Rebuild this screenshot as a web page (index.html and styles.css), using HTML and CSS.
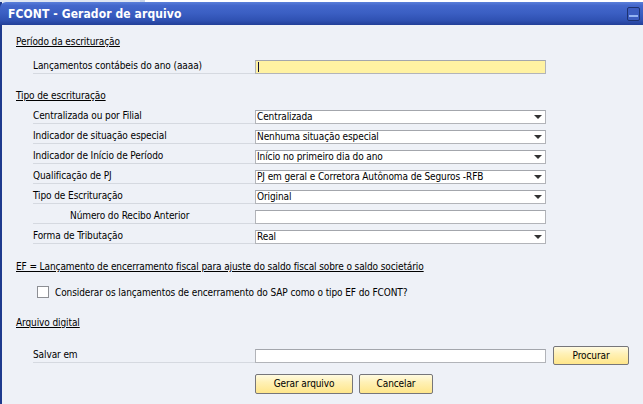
FILE: index.html
```html
<!DOCTYPE html>
<html lang="pt">
<head>
<meta charset="utf-8">
<title>FCONT - Gerador de arquivo</title>
<link rel="stylesheet" href="styles.css">
</head>
<body>
<div class="topstrip"></div>
<div class="window">
  <div class="titlebar">
    <span class="title">FCONT - Gerador de arquivo</span>
    <span class="minbtn"><span class="minbar"></span></span>
  </div>
  <div class="content">
    <div class="heading h1">Período da escrituração</div>
    <div class="rows r1">
      <div class="row">
        <div class="lbl">Lançamentos contábeis do ano (aaaa)</div>
        <div class="ctl yellow"><span class="caret"></span></div>
      </div>
    </div>

    <div class="heading h2">Tipo de escrituração</div>
    <div class="rows r2">
      <div class="row">
        <div class="lbl">Centralizada ou por Filial</div>
        <div class="ctl sel"><span class="val">Centralizada</span><span class="arrow"></span></div>
      </div>
      <div class="row">
        <div class="lbl">Indicador de situação especial</div>
        <div class="ctl sel"><span class="val">Nenhuma situação especial</span><span class="arrow"></span></div>
      </div>
      <div class="row">
        <div class="lbl">Indicador de Início de Período</div>
        <div class="ctl sel"><span class="val">Início no primeiro dia do ano</span><span class="arrow"></span></div>
      </div>
      <div class="row">
        <div class="lbl">Qualificação de PJ</div>
        <div class="ctl sel"><span class="val">PJ em geral e Corretora Autônoma de Seguros -RFB</span><span class="arrow"></span></div>
      </div>
      <div class="row">
        <div class="lbl">Tipo de Escrituração</div>
        <div class="ctl sel"><span class="val">Original</span><span class="arrow"></span></div>
      </div>
      <div class="row">
        <div class="lbl indent">Número do Recibo Anterior</div>
        <div class="ctl"></div>
      </div>
      <div class="row">
        <div class="lbl">Forma de Tributação</div>
        <div class="ctl sel"><span class="val">Real</span><span class="arrow"></span></div>
      </div>
    </div>

    <div class="heading h3">EF = Lançamento de encerramento fiscal para ajuste do saldo fiscal sobre o saldo societário</div>
    <div class="checkrow">
      <span class="checkbox"></span>
      <span class="checktext">Considerar os lançamentos de encerramento do SAP como o tipo EF do FCONT?</span>
    </div>

    <div class="heading h4">Arquivo digital</div>
    <div class="rows r4">
      <div class="row saverow">
        <div class="lbl">Salvar em</div>
        <div class="ctl"></div>
        <button class="btn btn-procurar">Procurar</button>
      </div>
      <div class="actions">
        <button class="btn btn-gerar">Gerar arquivo</button>
        <button class="btn btn-cancel">Cancelar</button>
      </div>
    </div>
  </div>
</div>
</body>
</html>
```

FILE: styles.css
```css
* { box-sizing: border-box; }
html, body {
  margin: 0;
  padding: 0;
  width: 643px;
  height: 404px;
  overflow: hidden;
  background: #eef1f7;
  font-family: "DejaVu Sans Condensed", "DejaVu Sans", sans-serif;
  font-size: 10px;
  letter-spacing: -0.1px;
  color: #000;
}
.topstrip {
  height: 2px;
  background: linear-gradient(90deg, #dfe6f2 0, #dfe6f2 140px, #c8d4ea 140px, #c8d4ea 145px, #ffffff 145px);
}
.window {
  border-left: 2px solid #1e3a8e;
  height: 402px;
  background: #eef1f7;
}
.titlebar {
  height: 23px;
  margin-left: -2px;
  border-top-left-radius: 6px;
  background: linear-gradient(#5b80da 0, #4468cc 15%, #3a5ec2 50%, #2f51b2 80%, #223f98 100%);
  display: flex;
  align-items: center;
  justify-content: space-between;
  padding: 0 3px 0 8px;
}
.title {
  color: #fff;
  font-weight: bold;
  font-size: 12px;
  letter-spacing: 0.1px;
}
.minbtn {
  width: 13px;
  height: 14px;
  border: 1px solid #1d3270;
  border-radius: 2px;
  background: #3b5cc0;
  display: flex;
  align-items: flex-end;
  justify-content: center;
  padding-bottom: 3px;
}
.minbar {
  width: 9px;
  height: 2px;
  background: #94b3f2;
}
.content {
  padding-left: 14px;
}
.heading {
  height: 14px;
  line-height: 14px;
  text-decoration: underline;
  white-space: nowrap;
}
.h1 { margin-top: 10px; }
.h2 { margin-top: 15px; }
.h3 { margin-top: 16px; }
.h4 { margin-top: 18px; }
.rows {
  padding-left: 17px;
  display: flex;
  flex-direction: column;
  gap: 6px;
}
.r1 { margin-top: 11px; }
.r2 { margin-top: 7px; }
.r4 { margin-top: 16px; gap: 9px; }
.row {
  display: flex;
  align-items: center;
  height: 14px;
}
.lbl {
  width: 222px;
  height: 14px;
  line-height: 12px;
  border-bottom: 1px solid #d5d9e0;
  white-space: nowrap;
}
.lbl.indent { padding-left: 37px; }
.ctl {
  width: 291px;
  height: 14px;
  background: #fff;
  border: 1px solid #b2b4b9;
  border-top-color: #a3a6ac;
  display: flex;
  align-items: center;
  padding-left: 1px;
  line-height: 12px;
  white-space: nowrap;
}
.ctl.yellow { background: #fff2a2; }
.caret {
  width: 1px;
  height: 10px;
  background: #10123a;
  margin-left: 1px;
}
.sel .val { flex: 1; overflow: hidden; }
.arrow {
  width: 0;
  height: 0;
  border-left: 4px solid transparent;
  border-right: 4px solid transparent;
  border-top: 4px solid #333;
  margin-right: 3px;
}
.checkrow {
  margin-top: 12px;
  padding-left: 21px;
  display: flex;
  align-items: center;
  height: 12px;
}
.checkbox {
  width: 12px;
  height: 12px;
  background: #fff;
  border: 1px solid #8d8f94;
}
.checktext {
  margin-left: 6px;
  white-space: nowrap;
}
.saverow { height: 19px; }
.btn {
  font-family: inherit;
  font-size: 10px;
  letter-spacing: -0.1px;
  color: #000;
  height: 19px;
  padding: 0;
  border: 1px solid #76767a;
  border-radius: 2px;
  background: linear-gradient(#fffbe2 0, #fff1b6 40%, #ffe68a 100%);
  line-height: 16px;
}
.btn-procurar { width: 76px; margin-left: 7px; }
.actions {
  display: flex;
  gap: 6px;
  padding-left: 222px;
}
.btn-gerar { width: 98px; height: 20px; }
.btn-cancel { width: 74px; height: 20px; }
```
